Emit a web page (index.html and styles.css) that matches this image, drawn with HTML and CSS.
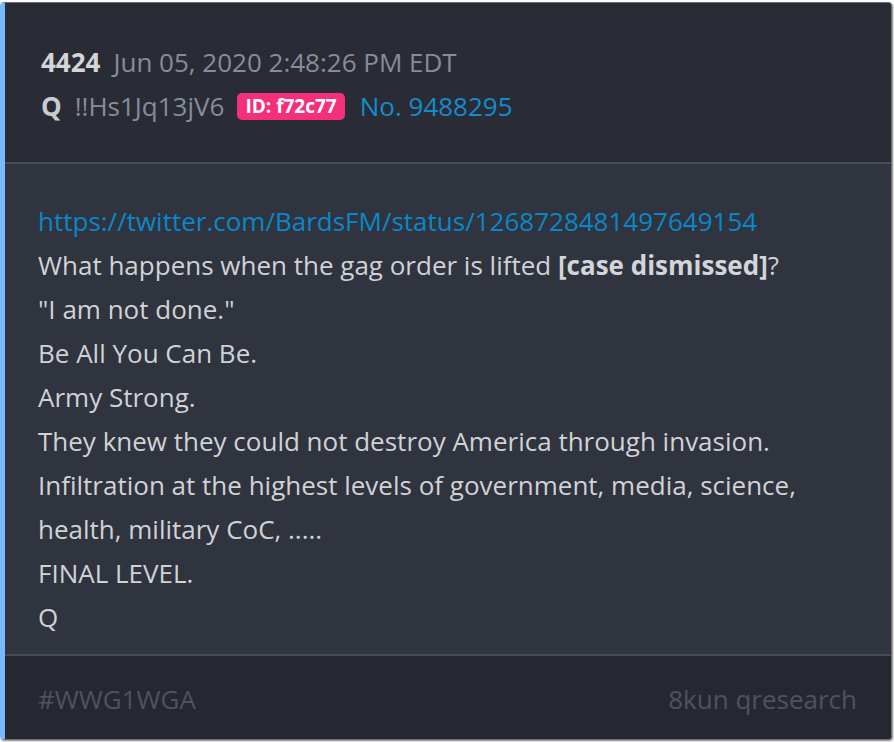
FILE: index.html
```html
<!DOCTYPE html>
<html lang="en">
<head>
  <meta charset="UTF-8" />
  <meta name="viewport" content="width=device-width, initial-scale=1.0"/>
  <title>4424</title>
  <link rel="stylesheet" href="styles.css">
</head>
<body>
  <div class="post">
    <div class="post-header">
      <div class="line">
        <span class="num">4424</span>
        <span class="date">Jun 05, 2020 2:48:26 PM EDT</span>
      </div>
      <div class="line">
        <span class="name">Q</span>
        <span class="trip">!!Hs1Jq13jV6</span>
        <span class="badge">ID: f72c77</span>
        <a class="postno" href="#">No. 9488295</a>
      </div>
    </div>
    <div class="post-body">
      <a class="link" href="#">https://twitter.com/BardsFM/status/1268728481497649154</a>
      <p>What happens when the gag order is lifted <b>[case dismissed]</b>?</p>
      <p>"I am not done."</p>
      <p>Be All You Can Be.</p>
      <p>Army Strong.</p>
      <p>They knew they could not destroy America through invasion.</p>
      <p>Infiltration at the highest levels of government, media, science, health, military CoC, .....</p>
      <p>FINAL LEVEL.</p>
      <p>Q</p>
    </div>
    <div class="post-footer">
      <span>#WWG1WGA</span>
      <span>8kun qresearch</span>
    </div>
  </div>
</body>
</html>
```

FILE: styles.css
```css
body {
  margin: 0;
  padding: 2px 1px 2px 0;
  background-color: #ffffff;
  font-family: "Open Sans", "Noto Sans", sans-serif;
  font-size: 26px;
}
.post {
  width: 886px;
  height: 736px;
  display: flex;
  flex-direction: column;
  background-color: #2f343e;
  border: 1px solid #6b6f78;
  border-left: 5px solid #79b8ff;
  border-radius: 4px;
  box-shadow: 1px 1px 2px rgba(0, 0, 0, 0.5);
  overflow: hidden;
}
.post-header {
  background-color: #292c35;
  padding: 37px 36px 34px;
  border-bottom: 2px solid #454a55;
}
.line {
  display: flex;
  align-items: center;
  height: 44px;
  gap: 13px;
}
.num {
  font-weight: bold;
  color: #d4d5d8;
}
.date, .trip {
  color: #878c98;
}
.name {
  font-weight: bold;
  color: #c9cbcf;
}
.badge {
  background-color: #f52f7a;
  color: #ffffff;
  font-weight: bold;
  font-size: 19px;
  line-height: 27px;
  padding: 0 8px;
  border-radius: 5px;
  margin-right: 2px;
}
.postno {
  color: #148bcd;
  text-decoration: none;
}
.post-body {
  flex: 1;
  padding: 35px 33px 0;
  line-height: 44px;
  color: #d0d2d6;
}
.post-body p {
  margin: 0;
}
.post-body b {
  color: #d4d5d8;
}
.link {
  display: block;
  color: #0b87c9;
  text-decoration: none;
}
.post-footer {
  display: flex;
  justify-content: space-between;
  align-items: center;
  box-sizing: border-box;
  height: 85px;
  padding: 2px 34px 0 33px;
  background-color: #252830;
  border-top: 2px solid #454a55;
  color: #4e535e;
}
```
